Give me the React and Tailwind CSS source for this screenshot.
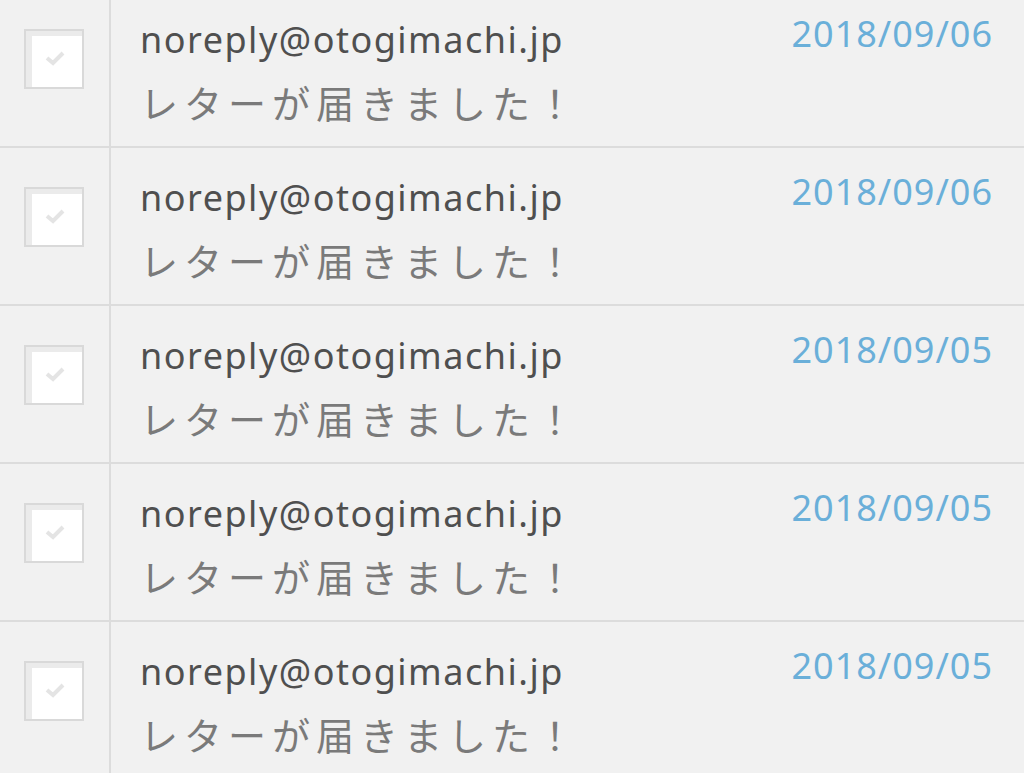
const mails = [
    { from: 'noreply@otogimachi.jp', subject: 'レターが届きました！', date: '2018/09/06' },
    { from: 'noreply@otogimachi.jp', subject: 'レターが届きました！', date: '2018/09/06' },
    { from: 'noreply@otogimachi.jp', subject: 'レターが届きました！', date: '2018/09/05' },
    { from: 'noreply@otogimachi.jp', subject: 'レターが届きました！', date: '2018/09/05' },
    { from: 'noreply@otogimachi.jp', subject: 'レターが届きました！', date: '2018/09/05' },
];

const CheckBox = () => (
    <div className="w-[60px] h-[60px] border-2 border-[#d9d9d9] bg-white shadow-[inset_6px_5px_0_#ebebeb] flex items-center justify-center">
        <svg width="22" height="18" viewBox="0 0 22 18" className="-mt-[2px] ml-[2px]">
            <path d="M3 9 L9 14 L19 4" fill="none" stroke="#e4e4e4" strokeWidth="4" />
        </svg>
    </div>
);

const MailRow = ({ mail }) => (
    <div className="flex h-[158px] border-b-2 border-[#dcdcdc]">
        {/* Checkbox column */}
        <div className="w-[111px] shrink-0 border-r-2 border-[#dcdcdc] pl-[24px] pt-[39px]">
            <CheckBox />
        </div>

        {/* Sender + subject */}
        <div className="flex-1 flex pl-[29px] pr-[31px]">
            <div className="flex-1 flex flex-col pt-[28px]">
                <p className="text-[36px] leading-[44px] tracking-[1.5px] text-[#4f4f4f] font-['Noto_Sans','Noto_Sans_CJK_JP',sans-serif]">
                    {mail.from}
                </p>
                <p className="mt-[15px] text-[38px] leading-[50px] tracking-[6px] text-[#7a7a7a] font-['Noto_Sans_CJK_JP',sans-serif]">
                    {mail.subject}
                </p>
            </div>
            <p className="pt-[22px] text-[36px] leading-[44px] tracking-[1px] text-[#6aafd9] font-['Noto_Sans','Noto_Sans_CJK_JP',sans-serif]">
                {mail.date}
            </p>
        </div>
    </div>
);

const App = () => {
    return (
        <div className="w-[1024px] h-[773px] overflow-hidden bg-[#f1f1f1]">
            <div className="-mt-[12px] border-t-2 border-white">
                {mails.map((mail, i) => (
                    <MailRow key={i} mail={mail} />
                ))}
            </div>
        </div>
    );
};

export default App;
